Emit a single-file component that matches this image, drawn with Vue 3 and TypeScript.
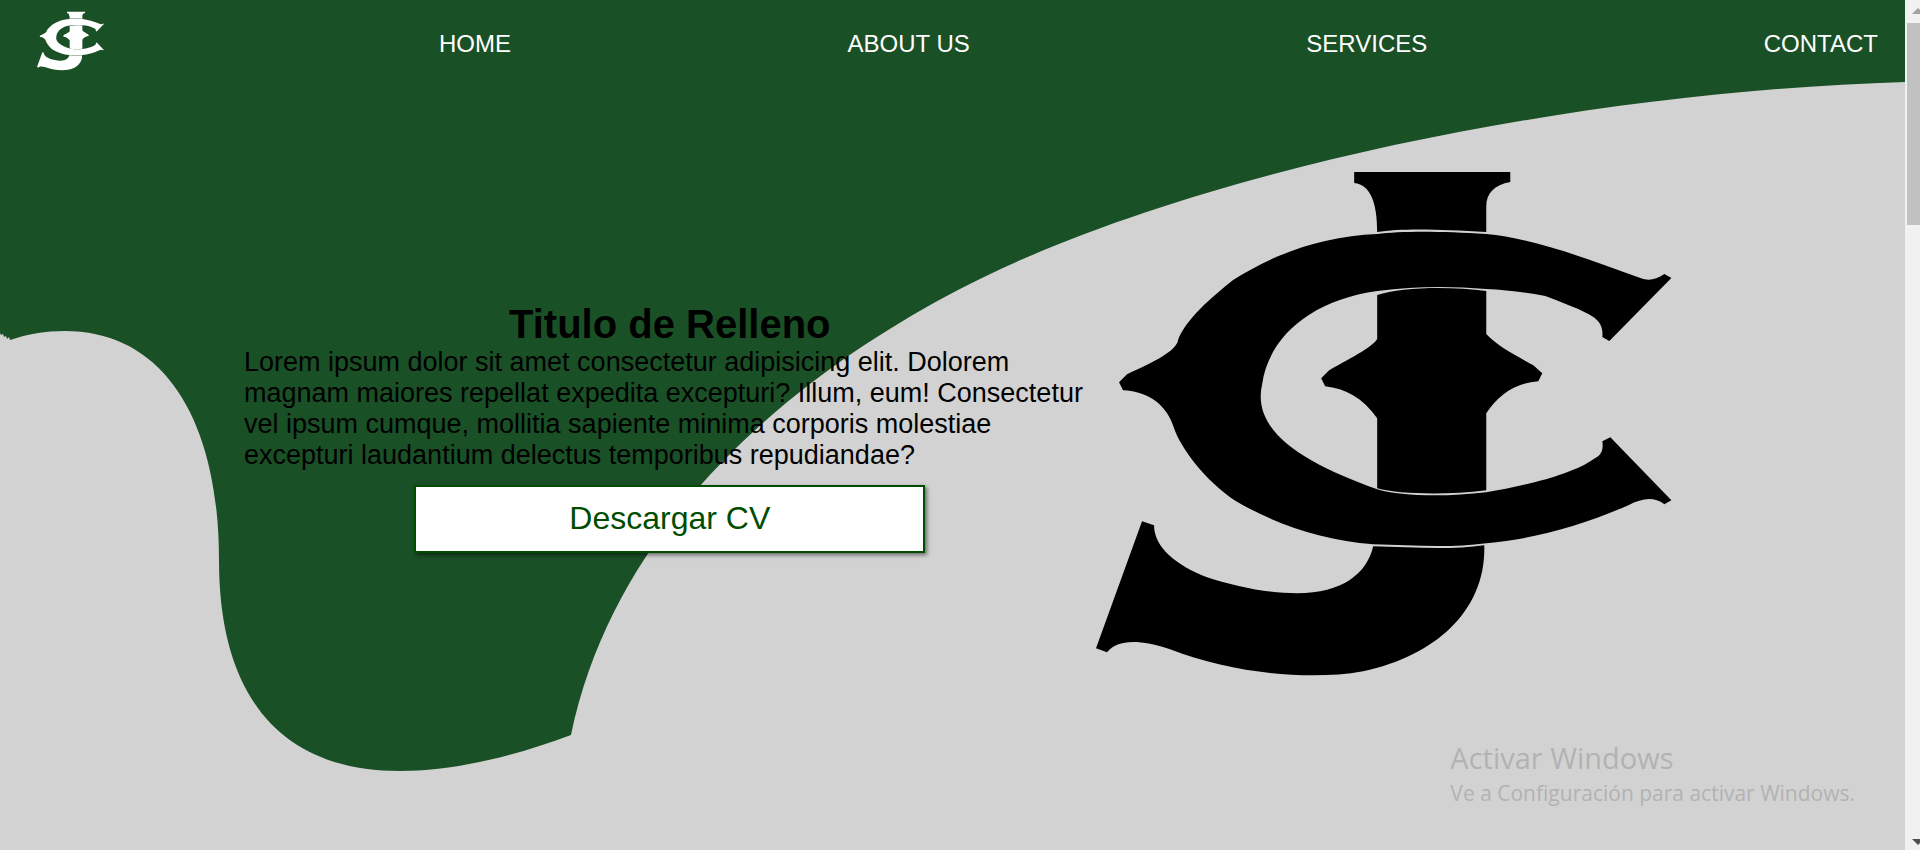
<script setup lang="ts">
interface NavLink {
  label: string
  href: string
}

const links: NavLink[] = [
  { label: 'HOME', href: '#home' },
  { label: 'ABOUT US', href: '#about' },
  { label: 'SERVICES', href: '#services' },
  { label: 'CONTACT', href: '#contact' },
]
</script>

<template>
  <svg class="defs" aria-hidden="true">
    <symbol id="monogram" viewBox="1096 171 576 505">
      <path d="M1354 172H1510V182C1494 185 1486 193 1486 207V232C1440 229 1400 228 1377 232C1377 204 1371 185 1354 183Z" />
      <path d="M1377 234C1400 231 1440 231 1486 234C1530 238 1583 257 1640 278C1648 281 1655 280 1664 274L1671 278L1609 341L1602 337C1603 326 1599 320 1588 314C1575 307 1560 302 1545 296C1525 292 1506 290 1486 289C1450 286 1415 286 1377 291C1312 300 1269 336 1262 384C1251 432 1305 463 1377 489C1400 496 1445 497 1486 492C1525 486 1574 473 1593 459C1602 455 1603 449 1602 441L1610 437L1671 500L1664 504C1653 496 1642 498 1628 505C1580 526 1532 539 1486 543C1450 548 1410 545 1373 544C1323 540 1275 524 1236 501C1204 480 1180 446 1174 428C1167 405 1149 391 1123 390L1119 382L1127 374C1155 362 1177 350 1178 340C1184 323 1204 303 1233 280C1275 253 1324 236 1377 234Z" />
      <path d="M1377 295C1400 287 1450 286 1486 291V334C1496 345 1514 355 1533 365L1542 373L1538 381C1514 383 1498 395 1486 413V490C1445 495 1400 494 1377 488V418C1363 398 1345 388 1325 386L1321 378L1329 370C1355 356 1373 346 1377 339Z" />
      <path d="M1373 546C1410 547 1450 550 1484 545C1486 609 1437 655 1363 671C1347 674 1330 675 1313 675C1264 675 1215 666 1170 649C1137 638 1117 640 1107 652L1096 648L1142 521L1154 525C1154 547 1176 565 1207 577C1235 586 1266 593 1297 593C1342 593 1367 573 1373 546Z" />
    </symbol>
  </svg>

  <div class="window">
    <div class="page">
      <svg class="wave" viewBox="0 0 1905 850" aria-hidden="true">
        <path d="M0 0H1905V82C1570 92 1180 174 958 290C828 358 620 500 571 735C510 758 450 771 400 771C275 771 219 690 219 560C219 420 164 331 65 331C45 331 28 334 10 340L9 337L7 339L6 336L4 337L3 334L1 335L0 333Z" />
      </svg>

      <header class="bar">
        <a class="brand" href="#home" aria-label="JC">
          <svg class="brand-mark" aria-hidden="true"><use href="#monogram" /></svg>
        </a>
        <nav class="links">
          <a v-for="link in links" :key="link.href" :href="link.href">{{ link.label }}</a>
        </nav>
      </header>

      <main class="hero">
        <section class="intro">
          <h1>Titulo de Relleno</h1>
          <p>
            Lorem ipsum dolor sit amet consectetur adipisicing elit. Dolorem magnam maiores
            repellat expedita excepturi? Illum, eum! Consectetur vel ipsum cumque, mollitia
            sapiente minima corporis molestiae excepturi laudantium delectus temporibus
            repudiandae?
          </p>
          <button type="button">Descargar CV</button>
        </section>
        <svg class="hero-mark" viewBox="0 0 576 505" role="img" aria-label="JC">
          <use href="#monogram" width="576" height="505" />
        </svg>
      </main>

      <aside class="notice">
        <p class="notice-title">Activar Windows</p>
        <p class="notice-text">Ve a Configuración para activar Windows.</p>
      </aside>
    </div>

    <div class="scroll" aria-hidden="true">
      <svg class="arrow" viewBox="0 0 15 23"><path class="up" d="M7 14L13 8L15 10V14Z" /></svg>
      <div class="thumb"></div>
      <svg class="arrow end" viewBox="0 0 15 23"><path class="down" d="M7 12H15V16L13 18Z" /></svg>
    </div>
  </div>
</template>

<style>
body {
  margin: 0;
}
</style>

<style scoped>
.defs {
  position: absolute;
  width: 0;
  height: 0;
}

.window {
  display: grid;
  grid-template-columns: minmax(0, 1fr) 15px;
  height: 100vh;
  overflow: hidden;
  font-family: "Liberation Sans", Arial, sans-serif;
}

.page {
  position: relative;
  display: flex;
  flex-direction: column;
  overflow: hidden;
  background: #d2d2d2;
  color: #000;
}

.wave {
  position: absolute;
  top: 0;
  left: 0;
  width: 100%;
  fill: #1a5026;
}

.bar {
  position: relative;
  display: flex;
  align-items: center;
  height: 82px;
  padding: 0 27px 0 37px;
}

.brand {
  display: flex;
}

.brand-mark {
  width: 67px;
  height: 60px;
  fill: #fff;
}

.links {
  flex: 1;
  display: flex;
  justify-content: space-between;
  margin-left: 335px;
  padding-top: 6px;
}

.links a {
  color: #fff;
  font-size: 24px;
  line-height: 28px;
  text-decoration: none;
}

.hero {
  position: relative;
  display: grid;
  grid-template-columns: minmax(0, 851fr) minmax(0, 576fr);
  align-items: center;
  margin: 0 233px 0 244px;
  padding-top: 89px;
}

.intro {
  display: flex;
  flex-direction: column;
  align-items: center;
  padding-top: 6px;
}

h1 {
  margin: 0;
  font-size: 40px;
  line-height: 46px;
}

.intro p {
  margin: 0;
  font-size: 27px;
  line-height: 31px;
}

button {
  width: 60%;
  height: 68px;
  margin-top: 14px;
  border: 2px solid #004d00;
  background: #fff;
  color: #004d00;
  font-family: inherit;
  font-size: 32px;
  box-shadow: 2px 2px 4px rgba(0, 0, 0, 0.5);
  cursor: pointer;
}

.hero-mark {
  width: 100%;
}

.notice {
  position: absolute;
  right: 50px;
  bottom: 42px;
  color: #b2b2b2;
  font-family: "Open Sans", "Noto Sans", sans-serif;
}

.notice p {
  margin: 0;
}

.notice-title {
  font-size: 29px;
  line-height: 40px;
}

.notice-text {
  font-size: 21px;
  line-height: 30px;
}

.scroll {
  display: flex;
  flex-direction: column;
  background: #f1f1f1;
}

.arrow {
  width: 15px;
  height: 23px;
}

.end {
  margin-top: auto;
}

.up {
  fill: #a3a3a3;
}

.down {
  fill: #505050;
}

.thumb {
  height: 202px;
  margin-left: 2px;
  background: #c1c1c1;
}
</style>
